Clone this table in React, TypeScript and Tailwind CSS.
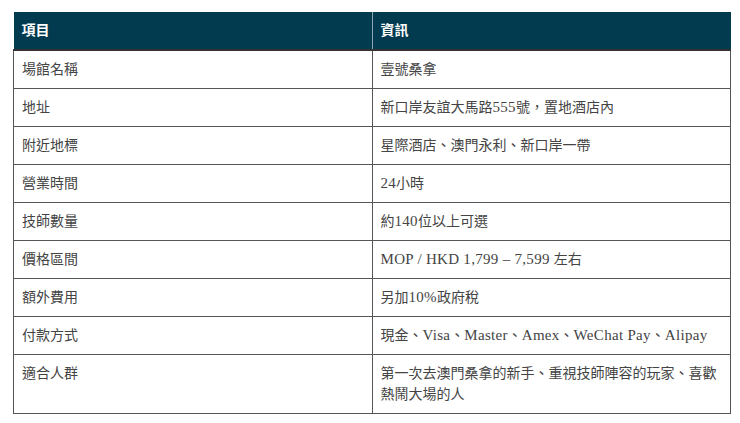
import React from 'react';

const rows: [string, string][] = [
  ['場館名稱', '壹號桑拿'],
  ['地址', '新口岸友誼大馬路555號，置地酒店內'],
  ['附近地標', '星際酒店、澳門永利、新口岸一帶'],
  ['營業時間', '24小時'],
  ['技師數量', '約140位以上可選'],
  ['價格區間', 'MOP / HKD 1,799 – 7,599 左右'],
  ['額外費用', '另加10%政府稅'],
  ['付款方式', '現金、Visa、Master、Amex、WeChat Pay、Alipay'],
  ['適合人群', '第一次去澳門桑拿的新手、重視技師陣容的玩家、喜歡熱鬧大場的人'],
];

// latin runs are set a touch larger than the CJK text, like the source page
const Mixed: React.FC<{ text: string }> = ({ text }) => (
  <>
    {text.split(/([A-Za-z0-9%,./– ]+)/).map((part, i) =>
      /[A-Za-z0-9]/.test(part) ? (
        <span key={i} className="text-[15px] tracking-[0.3px]">
          {part}
        </span>
      ) : (
        <React.Fragment key={i}>{part}</React.Fragment>
      )
    )}
  </>
);

const App: React.FC = () => {
  return (
    <div
      className="w-[740px] h-[423px] bg-white pt-3 pl-[13px]"
      style={{ fontFamily: '"Liberation Serif", "Noto Sans CJK TC", serif' }}
    >
      <table className="w-[718px] border-collapse table-fixed text-[14px] leading-[21px] text-[#444]">
        <thead>
          <tr className="bg-[#023b4f] text-white">
            <th className="w-1/2 text-left font-bold px-2 py-[8px] border-r border-r-[#8fa6b0] border-b-2 border-b-[#333]">
              項目
            </th>
            <th className="w-1/2 text-left font-bold px-2 py-[8px] border-b-2 border-b-[#333]">
              資訊
            </th>
          </tr>
        </thead>
        <tbody>
          {rows.map(([k, v]) => (
            <tr key={k}>
              <td className="align-top px-2 py-[8px] border border-[#555]">{k}</td>
              <td className="align-top px-2 py-[8px] border border-[#555]">
                <Mixed text={v} />
              </td>
            </tr>
          ))}
        </tbody>
      </table>
    </div>
  );
};

export default App;
